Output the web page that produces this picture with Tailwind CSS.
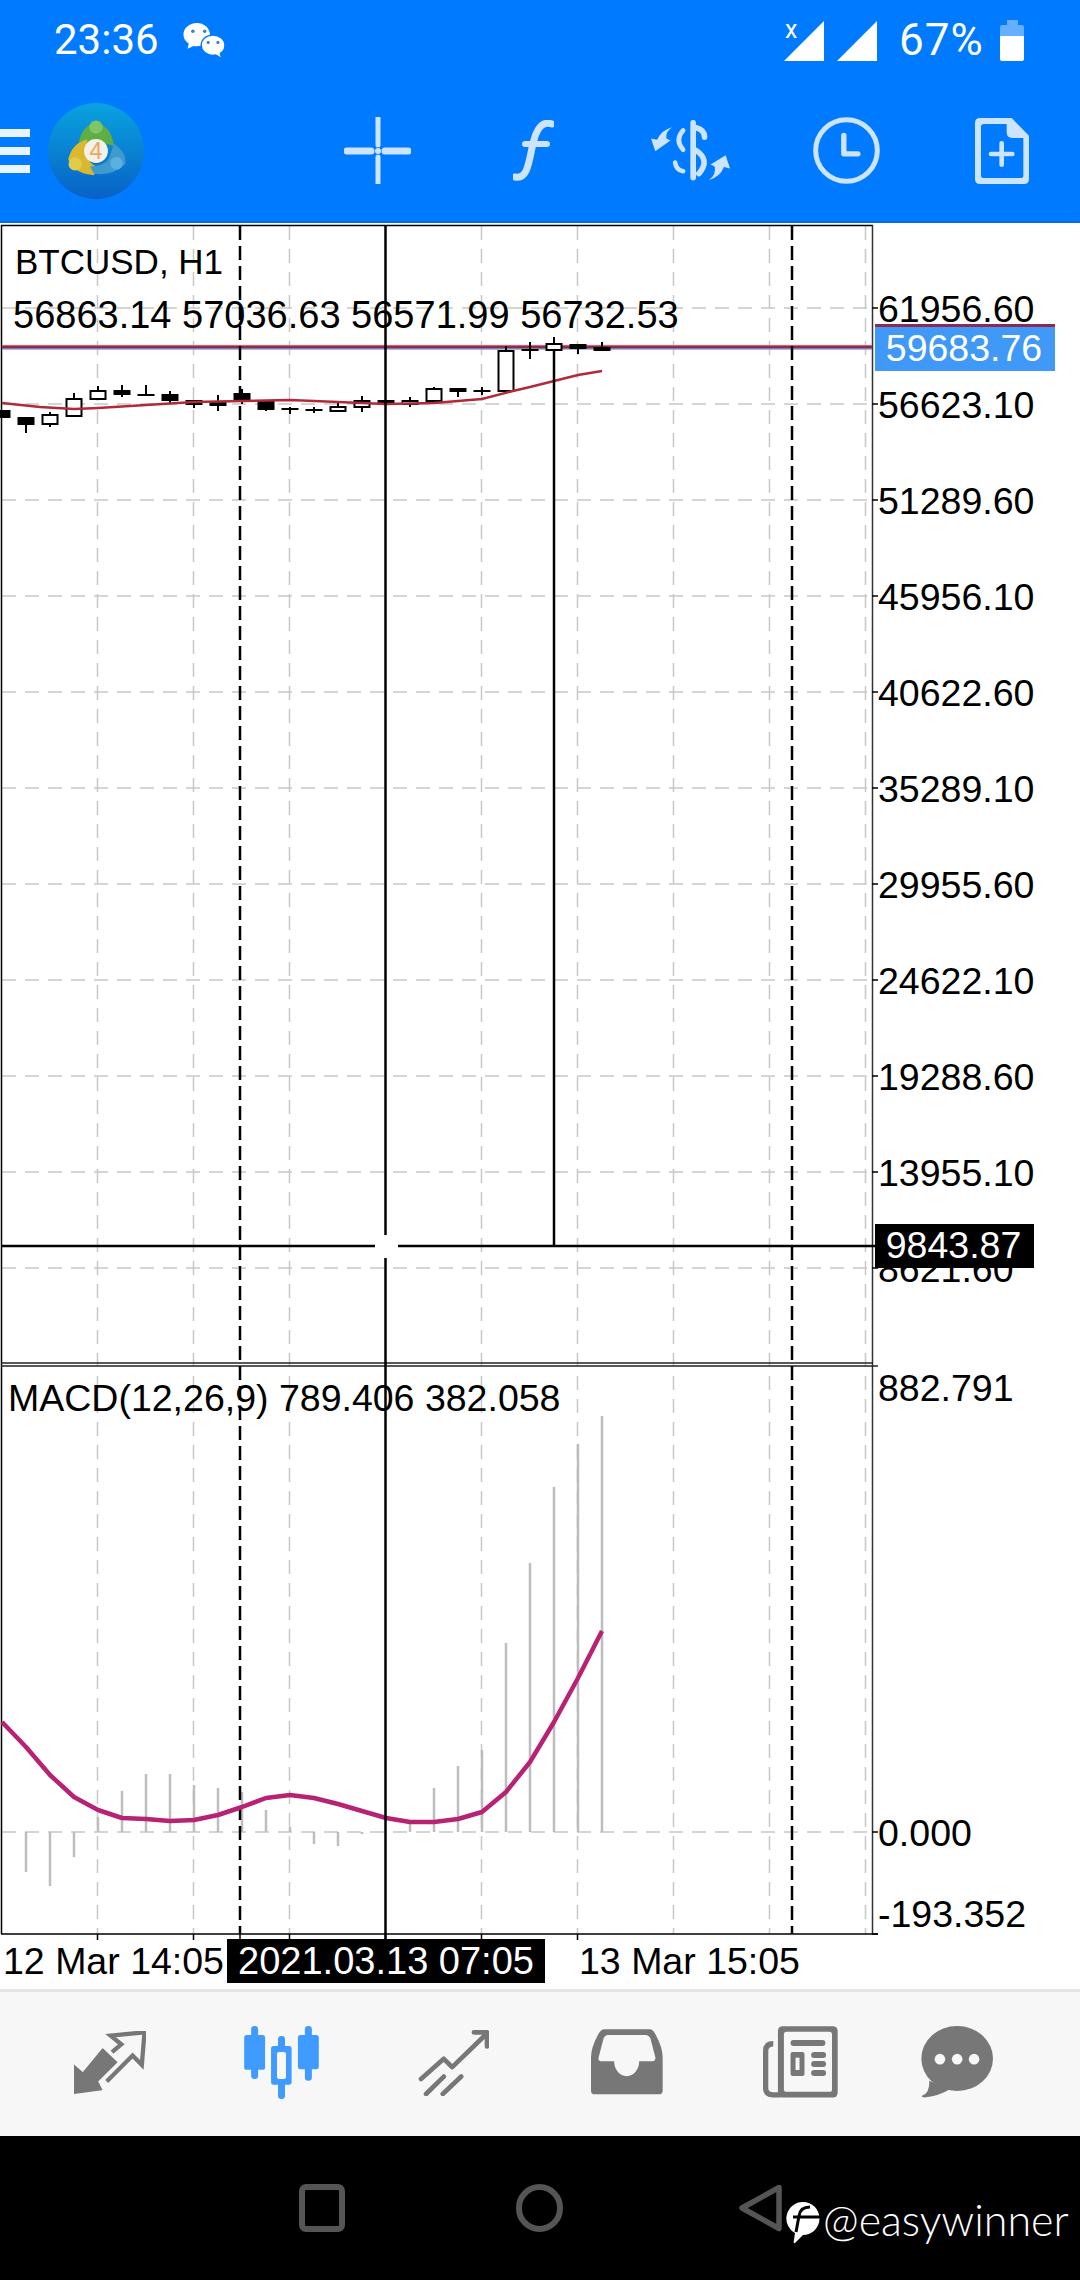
<!DOCTYPE html>
<html lang="en">
<head>
    <meta charset="UTF-8">
    <meta name="viewport" content="width=device-width, initial-scale=1.0">
    <title>MT4 BTCUSD chart</title>
    <script src="https://cdn.jsdelivr.net/npm/@tailwindcss/browser@4"></script>
</head>
<body class="bg-white font-['Liberation_Sans',sans-serif]">
<div class="w-[1080px] h-[2280px] flex flex-col overflow-hidden">

    <!-- Header -->
    <header class="bg-[#007aff] h-[223px] shrink-0 border-b-2 border-[#0a6fdc]">
        <!-- Status bar -->
        <div class="h-[80px] flex items-center justify-between pl-[54px] pr-[56px] text-white font-['Roboto',sans-serif] text-[42px] leading-none">
            <div class="flex items-center gap-[22px]">
                <span>23:36</span>
                <svg class="w-[46px] h-[40px]" viewBox="30 30 132 114">
                    <path d="M75 38c-21 0-38 15-38 33 0 11 6 20 15 26l-3 15 17-8c3 .5 6 1 9 1 21 0 38-15 38-34S96 38 75 38z" fill="#fff"/>
                    <circle cx="64" cy="62" r="5" fill="#3f7fd0"/><circle cx="98" cy="62" r="5" fill="#3f7fd0"/>
                    <path d="M121 73c-19 0-33 13-33 29s14 29 33 29c3 0 6 0 9-1l17 11-4-16c9-5 13-13 13-23 0-16-15-29-35-29z" fill="#fff" stroke="#007aff" stroke-width="4"/>
                    <circle cx="108" cy="94" r="4.5" fill="#3f7fd0"/><circle cx="136" cy="94" r="4.5" fill="#3f7fd0"/>
                </svg>
            </div>
            <div class="flex items-center">
                <div class="relative w-[93px] h-[40px] mt-[2px]">
                    <span class="absolute left-[1px] -top-[4px] text-[25px] leading-none">x</span>
                    <svg class="absolute inset-0" width="93" height="40" viewBox="0 0 93 40">
                        <path d="M40 0V40H0Z M93 0V40H53Z" fill="#fff"/>
                    </svg>
                </div>
                <span class="ml-[22px] mr-[17px] w-[84px] text-[44px] tracking-[1px] whitespace-nowrap">67%</span>
                <svg width="24" height="41" viewBox="0 0 24 41">
                    <path d="M7 0h11v5h4q2 0 2 2v9H0V7q0-2 2-2h5z" fill="#66aeff"/>
                    <path d="M0 16h24v23q0 2-2 2H2q-2 0-2-2z" fill="#fff"/>
                </svg>
            </div>
        </div>
        <!-- Toolbar -->
        <div class="h-[141px] flex items-center">
            <div class="flex flex-col gap-[10px] w-[30px]">
                <div class="h-[8px] bg-[#eaf4ff]"></div>
                <div class="h-[8px] bg-[#eaf4ff]"></div>
                <div class="h-[8px] bg-[#eaf4ff]"></div>
            </div>
            <!-- MT4 logo -->
            <svg class="ml-[18px]" width="96" height="96" viewBox="143 40 290 290">
                <defs>
                    <linearGradient id="logoBg" x1="0" y1="0" x2="0" y2="1">
                        <stop offset="0" stop-color="#0aa3df"/>
                        <stop offset="1" stop-color="#0861c6"/>
                    </linearGradient>
                </defs>
                <circle cx="288" cy="185" r="145" fill="url(#logoBg)"/>
                <path d="M236 165Q240 112 288 98Q336 112 342 170L300 158L268 165Z" fill="#5fae45"/>
                <circle cx="288" cy="113" r="20" fill="#7fc566"/>
                <path d="M262 150Q216 160 204 210Q222 254 282 258L290 232Q248 215 262 150Z" fill="#d9b82e"/>
                <circle cx="225" cy="224" r="20" fill="#e3cb4a"/>
                <path d="M342 163Q382 190 376 225Q340 260 282 254L270 232Q322 228 330 200Z" fill="#3f9ad0"/>
                <circle cx="350" cy="222" r="19" fill="#5cb0de"/>
                <circle cx="288" cy="185" r="36" fill="#f4f1ea"/>
                <text x="288" y="210" text-anchor="middle" font-family="Liberation Sans" font-size="70" fill="#eda75a">4</text>
            </svg>
            <!-- crosshair -->
            <svg class="ml-[200px]" width="67" height="67" viewBox="344 118 67 67">
                <path d="M378 118V146M378 158V185" stroke="#cce4ff" stroke-width="5" stroke-linecap="round"/>
                <path d="M347 152H371M385 152H408" stroke="#cce4ff" stroke-width="7" stroke-linecap="round"/>
                <circle cx="378" cy="152" r="3" fill="#cce4ff"/>
            </svg>
            <!-- f -->
            <svg class="ml-[102px]" width="41" height="62" viewBox="513 122 41 62">
                <path d="M552 126C540 122 535 135 532 150C528 170 526 181 515 179" fill="none" stroke="#cce4ff" stroke-width="7" stroke-linecap="round"/>
                <path d="M525 146H547" stroke="#cce4ff" stroke-width="6" stroke-linecap="round"/>
            </svg>
            <!-- dollar arrows -->
            <svg class="ml-[97px]" width="79" height="61" viewBox="62 45 236 182">
                <g fill="none" stroke="#cce4ff" stroke-linecap="round">
                    <path d="M188 53V217" stroke-width="17"/>
                    <path d="M197 68Q222 74 222 96" stroke-width="17"/>
                    <path d="M158 76Q132 104 158 134" stroke-width="14"/>
                    <path d="M197 136Q240 165 205 205" stroke-width="17"/>
                    <path d="M134 172Q138 195 158 198" stroke-width="14"/>
                </g>
                <path d="M127 66Q105 78 108 100L120 106L75 138L62 100L80 104Q92 76 127 66Z" fill="#cce4ff"/>
                <path d="M235 224Q258 208 252 184L240 178L285 150L298 190L280 185Q268 215 235 224Z" fill="#cce4ff"/>
            </svg>
            <!-- clock -->
            <svg class="ml-[83px]" width="67" height="67" viewBox="548 40 200 200">
                <circle cx="648" cy="140" r="92" fill="none" stroke="#cce4ff" stroke-width="15"/>
                <path d="M640 95V150H682" fill="none" stroke="#cce4ff" stroke-width="16" stroke-linecap="round" stroke-linejoin="round"/>
            </svg>
            <!-- new document -->
            <svg class="ml-[95px]" width="54" height="66" viewBox="1035 42 162 198">
                <path d="M1050 42H1145L1197 95V225Q1197 240 1182 240H1050Q1035 240 1035 225V57Q1035 42 1050 42Z" fill="#cce4ff"/>
                <path d="M1062 60H1130V85Q1130 102 1147 102H1180V215Q1180 222 1172 222H1060Q1053 222 1053 215V68Q1053 60 1062 60Z" fill="#007aff"/>
                <path d="M1115 118V182M1083 150H1147" stroke="#cce4ff" stroke-width="14" stroke-linecap="round"/>
            </svg>
        </div>
    </header>

    <!-- Chart area -->
    <main class="relative h-[1766px] shrink-0 bg-white text-black text-[37.5px] leading-none">
        <svg id="chart" class="absolute inset-0" width="1080" height="1766" viewBox="0 223 1080 1766"></svg>

        <p class="absolute left-[15px] top-[21px] text-[35px] leading-none">BTCUSD, H1</p>
        <p class="absolute left-[13px] top-[73px] text-[38px] whitespace-nowrap">56863.14 57036.63 56571.99 56732.53</p>

        <!-- price axis -->
        <div class="absolute left-[878px] top-[39px] flex flex-col">
            <div class="h-[96px] flex items-center">61956.60</div>
            <div class="h-[96px] flex items-center">56623.10</div>
            <div class="h-[96px] flex items-center">51289.60</div>
            <div class="h-[96px] flex items-center">45956.10</div>
            <div class="h-[96px] flex items-center">40622.60</div>
            <div class="h-[96px] flex items-center">35289.10</div>
            <div class="h-[96px] flex items-center">29955.60</div>
            <div class="h-[96px] flex items-center">24622.10</div>
            <div class="h-[96px] flex items-center">19288.60</div>
            <div class="h-[96px] flex items-center">13955.10</div>
            <div class="h-[96px] flex items-center">8621.60</div>
        </div>

        <!-- current price -->
        <div class="absolute left-[875px] top-[101px] w-[180px] h-[47px] bg-[#4098f7] border-t-[3px] border-[#8c2a52] text-white flex items-center justify-center pr-[2px]">59683.76</div>
        <!-- crosshair price -->
        <div class="absolute left-[875px] top-[1001px] w-[159px] h-[44px] bg-black text-white flex items-center justify-center pr-[2px]">9843.87</div>

        <!-- MACD -->
        <p class="absolute left-[8px] top-[1157px] whitespace-nowrap">MACD(12,26,9) 789.406 382.058</p>
        <p class="absolute left-[878px] top-[1147px]">882.791</p>
        <p class="absolute left-[878px] top-[1592px]">0.000</p>
        <p class="absolute left-[878px] top-[1673px]">-193.352</p>

        <!-- time axis -->
        <p class="absolute left-[3px] top-[1720px] whitespace-nowrap">12 Mar 14:05</p>
        <div class="absolute left-[227px] top-[1716px] w-[318px] h-[44px] bg-black text-white text-[38px] flex items-center justify-center whitespace-nowrap">2021.03.13 07:05</div>
        <p class="absolute left-[579px] top-[1720px] whitespace-nowrap">13 Mar 15:05</p>
    </main>

    <!-- Bottom navigation -->
    <nav class="h-[147px] shrink-0 bg-[#f7f7f7] border-t-[3px] border-[#e5e5e5] flex items-center pb-[4px]">
        <svg class="ml-[74px]" width="72" height="63" viewBox="42 48 216 190">
            <path d="M42 236V152L68 175L128 102L170 142L112 200L125 225Z" fill="#777" stroke="#777" stroke-width="4" stroke-linejoin="round"/>
            <path d="M140 200L218 122L246 150L254 52L152 62L184 88L156 112" fill="none" stroke="#777" stroke-width="13"/>
        </svg>
        <svg class="ml-[98px]" width="75" height="73" viewBox="552 30 225 220">
            <g fill="#3f9bff">
                <rect x="552" y="57" width="63" height="105" rx="8"/><rect x="573" y="30" width="21" height="160" rx="10"/>
                <rect x="633" y="90" width="62" height="117" rx="8"/><rect x="654" y="60" width="21" height="190" rx="10"/>
                <rect x="714" y="57" width="63" height="103" rx="8"/><rect x="735" y="30" width="21" height="165" rx="10"/>
            </g>
            <rect x="651" y="108" width="27" height="82" rx="6" fill="#f7f7f7"/>
        </svg>
        <svg class="ml-[98px]" width="72" height="67" viewBox="1070 36 215 200">
            <g fill="none" stroke="#777" stroke-width="14" stroke-linecap="round" stroke-linejoin="round">
                <path d="M1082 185L1150 125L1175 150L1278 50"/>
                <path d="M1240 46H1279V88"/>
                <path d="M1097 230L1150 178M1147 230L1202 178"/>
            </g>
        </svg>
        <svg class="ml-[102px]" width="72" height="66" viewBox="30 40 218 198">
            <path d="M70 40H208Q218 40 225 55Q247 95 247 125V225Q247 237 235 237H42Q30 237 30 225V125Q30 95 52 55Q60 40 70 40Z" fill="#777"/>
            <path d="M82 57H195Q205 57 210 68L225 125Q226 137 212 137H176A38 45 0 0 1 100 137H65Q50 137 53 125L68 68Q72 57 82 57Z" fill="#f7f7f7"/>
        </svg>
        <svg class="ml-[100px]" width="75" height="72" viewBox="547 30 226 216">
            <path d="M578 83Q555 83 555 105V218Q555 237 578 237H600" fill="none" stroke="#777" stroke-width="16"/>
            <rect x="592" y="30" width="180" height="215" rx="14" fill="#777"/>
            <rect x="610" y="47" width="145" height="181" rx="8" fill="#f7f7f7"/>
            <g fill="#777">
                <rect x="630" y="72" width="105" height="18" rx="9"/>
                <rect x="630" y="108" width="42" height="72" rx="6"/>
                <rect x="692" y="108" width="45" height="18" rx="9"/>
                <rect x="692" y="135" width="45" height="18" rx="9"/>
                <rect x="692" y="162" width="45" height="18" rx="9"/>
            </g>
            <rect x="645" y="125" width="12" height="37" fill="#f7f7f7"/>
        </svg>
        <svg class="ml-[83px]" width="72" height="72" viewBox="1025 30 217 217">
            <ellipse cx="1134" cy="128" rx="108" ry="98" fill="#777"/>
            <path d="M1050 195Q1052 232 1028 240Q1026 246 1040 245Q1078 240 1110 222Z" fill="#777"/>
            <circle cx="1082" cy="130" r="16" fill="#f7f7f7"/>
            <circle cx="1134" cy="130" r="16" fill="#f7f7f7"/>
            <circle cx="1185" cy="130" r="16" fill="#f7f7f7"/>
        </svg>
    </nav>

    <!-- System navigation -->
    <footer class="relative flex-1 bg-black flex items-center">
        <div class="ml-[299px] w-[46px] h-[48px] rounded-[7px] border-[6px] border-[#555]"></div>
        <div class="ml-[171px] w-[47px] h-[48px] rounded-full border-[6px] border-[#555]"></div>
        <svg class="ml-[175px]" width="44" height="48" viewBox="0 0 44 48">
            <path d="M41 3.5L4 24L41 44.5Z" fill="none" stroke="#555" stroke-width="5.500" stroke-linejoin="round"/>
        </svg>
        <!-- watermark -->
        <div class="absolute left-[784px] top-[66px] flex items-start">
            <svg width="38" height="42" viewBox="0 0 36 42">
                <path d="M18 0A16.500 16.500 0 0 1 18 33L10 41Q8 42 9 38L10 31A16.500 16.500 0 0 1 18 0Z" fill="#fff"/>
                <path d="M25 5Q15 5 14 14L11 30M8 15H36" fill="none" stroke="#000" stroke-width="3"/>
            </svg>
            <span class="ml-[1px] -mt-[4px] text-white font-['Lato',sans-serif] font-light text-[43px] leading-none whitespace-nowrap">@easywinner</span>
        </div>
    </footer>
</div>

<script>
    // chart is drawn from data, coordinates are page pixels (viewBox starts at y=223)
    const gridX = [97.5, 193.5, 289.5, 481.5, 577.5, 673.5, 769.5, 865.5];
    const gridY = [308, 404, 500, 596, 692, 788, 884, 980, 1076, 1172, 1268, 1832];
    // x, bodyTop, bodyBottom, wickTop, wickBottom, black
    const candles = [
        [2, 410, 418, 410, 418, 1], [26, 417, 425, 417, 433, 1], [50, 415, 424, 412, 427, 0],
        [74, 399, 416, 393, 416, 0], [98, 391, 399, 386, 399, 0], [122, 390, 395, 385, 397, 1],
        [146, 394, 396, 385, 395, 1], [170, 394, 401, 391, 403, 1], [194, 400, 405, 400, 408, 1],
        [218, 401, 406, 395, 411, 1], [242, 393, 402, 389, 404, 1], [266, 401, 410, 401, 411, 1],
        [290, 408, 410, 407, 414, 1], [314, 409, 411, 407, 413, 1], [338, 407, 411, 403, 411, 0],
        [362, 401, 407, 396, 412, 0], [386, 400, 404, 400, 404, 1], [410, 401, 404, 397, 407, 0],
        [434, 389, 401, 387, 401, 0], [458, 388, 392, 388, 397, 1], [482, 390, 392, 387, 395, 1],
        [506, 351, 391, 346, 391, 0], [530, 349, 351, 342, 359, 1], [554, 344, 350, 337, 350, 0],
        [578, 344, 349, 344, 354, 1], [602, 347, 351, 342, 351, 1]
    ];
    const bars = [[26,1872],[50,1886],[74,1857],[98,1817],[122,1791],[146,1774],[170,1774],[194,1785],[218,1788],[242,1792],[266,1810],[290,1827],[314,1844],[338,1846],[362,1834],[410,1823],[434,1788],[458,1766],[482,1750],[506,1643],[530,1563],[554,1487],[578,1444],[602,1416]];
    const ma = "2,403 40,407 74,409 98,408 146,405 194,402 242,401 290,400 338,402 386,404 434,403 482,399 513,391 530,387 554,381 578,375 602,371";
    const macd = "2,1722 26,1747 50,1775 74,1797 98,1810 122,1818 146,1819 170,1821 194,1820 218,1815 242,1807 266,1798 290,1795 314,1798 338,1804 362,1811 386,1818 410,1822 434,1822 458,1819 482,1812 506,1792 530,1762 554,1722 578,1678 602,1631";

    const line = (x1, y1, x2, y2, color, w, dash) =>
        `<line x1="${x1}" y1="${y1}" x2="${x2}" y2="${y2}" stroke="${color}" stroke-width="${w}"${dash ? ` stroke-dasharray="${dash}"` : ""}/>`;

    let out = "";
    gridX.forEach(x => { out += line(x, 226, x, 1934, "#c8c8c8", 1.5, "14 9"); });
    gridY.forEach(y => { out += line(2, y, 872, y, "#c8c8c8", 1.5, "14 9"); });

    // frame and ticks
    out += line(1.5, 225, 1.5, 1934, "#000", 1.5) + line(1, 225.5, 873, 225.5, "#000", 1.5);
    out += line(872.5, 225, 872.5, 1934, "#333", 1.5);
    out += line(1, 1363, 873, 1363, "#222", 1.5) + line(1, 1366, 878, 1366, "#222", 1.5);
    out += line(1, 1934, 878, 1934, "#000", 1.5);
    gridY.concat([1934]).forEach(y => { out += line(872, y, 878, y, "#000", 1.5); });
    gridX.slice(0, 5).concat([385.5, 240]).forEach(x => { out += line(x, 1934, x, 1940, "#000", 1.5); });

    // price line
    out += line(2, 345.5, 872, 345.5, "#f4a6a6", 1.5) + line(2, 349, 872, 349, "#84a6dc", 1.5) + line(2, 347, 872, 347, "#8c2a52", 3);

    // histogram
    bars.forEach(([x, y]) => { out += line(x, 1832, x, y, "#bdbdbd", 2.5); });

    // dashed period separators
    [240, 792].forEach(x => { out += line(x, 226, x, 1934, "#000", 2.5, "14 6"); });

    // candles
    candles.forEach(([x, t, b, wt, wb, black]) => {
        out += line(x, wt, x, wb, "#000", 2);
        const w = 15;
        out += black
            ? `<rect x="${x - w / 2 - 1}" y="${t}" width="${w + 2}" height="${b - t}" fill="#000"/>`
            : `<rect x="${x - w / 2}" y="${t}" width="${w}" height="${b - t}" fill="#fff" stroke="#000" stroke-width="2"/>`;
    });

    // MA and MACD lines
    out += `<polyline points="${ma}" fill="none" stroke="#b22a3a" stroke-width="2.5"/>`;
    out += `<polyline points="${macd}" fill="none" stroke="#b82273" stroke-width="4.5" stroke-linejoin="round"/>`;

    // crosshair
    out += line(385.5, 225, 385.5, 1235, "#000", 2.5) + line(385.5, 1258, 385.5, 1940, "#000", 2.5);
    out += line(2, 1246, 375, 1246, "#000", 2.5) + line(398, 1246, 876, 1246, "#000", 2.5);
    out += line(554, 350, 554, 1246, "#000", 2.5);

    document.getElementById("chart").innerHTML = out;
</script>
</body>
</html>
